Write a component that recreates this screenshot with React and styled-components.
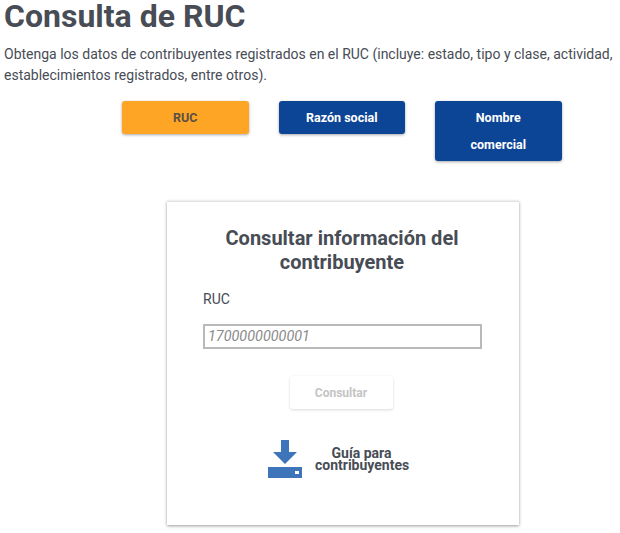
import styled, { createGlobalStyle } from "styled-components"

const GlobalStyle = createGlobalStyle`
html, body {
    margin:0;
    padding:0;
    background:#fff;
    font-family:Roboto, "Liberation Sans", sans-serif;
    overflow:hidden;
}
`

function DownloadIcon(){
    return (
        <svg width="34" height="38" viewBox="0 0 34 38">
            <path d="M13 0H21V12H29L17 24L5 12H13Z" fill="#3e74b9"/>
            <path d="M0 27H34V38H0Z" fill="#3e74b9"/>
            <rect x="27" y="31" width="4" height="3" fill="#fff"/>
        </svg>
    )
}

export default function App(){
    return(<>
    <GlobalStyle/>
    <Page>
        <Title>Consulta de RUC</Title>
        <Intro>Obtenga los datos de contribuyentes registrados en el RUC (incluye: estado, tipo y clase, actividad, establecimientos registrados, entre otros).</Intro>
        <Tabs>
            <TabButton $active>RUC</TabButton>
            <TabButton>Razón social</TabButton>
            <TabButton>Nombre comercial</TabButton>
        </Tabs>
        <Card>
            <CardTitle>Consultar información del contribuyente</CardTitle>
            <FieldLabel>RUC</FieldLabel>
            <FieldInput placeholder="1700000000001"/>
            <SubmitButton disabled>Consultar</SubmitButton>
            <GuideLink>
                <DownloadIcon/>
                <GuideText>Guía para contribuyentes</GuideText>
            </GuideLink>
        </Card>
    </Page></>
    )
}

const Page = styled.div`
display:flex;
flex-direction:column;
width:620px;
height:533px;
overflow:hidden;
color:#474c55;
`
const Title = styled.h1`
margin:0 0 0 4px;
font-size:32px;
line-height:32px;
font-weight:700;
color:#474c55;
`
const Intro = styled.p`
margin:12px 0 0 4px;
width:612px;
font-size:14px;
line-height:21px;
color:#474c55;
`
const Tabs = styled.div`
display:flex;
align-items:flex-start;
gap:30px;
margin-top:15px;
padding-left:122px;
`
const TabButton = styled.button`
width:126.500px;
padding:3px 24px;
border:none;
border-radius:3px;
background:${props => props.$active ? "#ffa526" : "#0d4596"};
color:${props => props.$active ? "#5a5045" : "#fff"};
font-family:inherit;
font-size:12.500px;
font-weight:700;
line-height:27px;
box-shadow:0 1px 3px rgba(0,0,0,0.35);
`
const Card = styled.div`
display:flex;
flex-direction:column;
align-items:center;
box-sizing:border-box;
width:352px;
height:324px;
margin:40px 0 0 167px;
padding:24px 38px 0 36px;
border-top:1px solid #e2e2e2;
background:#fff;
box-shadow:0 1px 3px rgba(0,0,0,0.4);
`
const CardTitle = styled.h2`
margin:0;
font-size:20px;
line-height:24px;
font-weight:700;
text-align:center;
color:#474c55;
`
const FieldLabel = styled.label`
align-self:flex-start;
margin-top:16px;
font-size:14px;
line-height:18px;
color:#474c55;
`
const FieldInput = styled.input`
align-self:flex-start;
box-sizing:border-box;
width:279px;
height:25px;
margin-top:16px;
padding:0 3px;
border:2px solid #b9b9b9;
outline:none;
font-family:inherit;
font-size:14.400px;
font-style:italic;
&::placeholder{
    color:#8a8a8a;
    opacity:1;
}
`
const SubmitButton = styled.button`
width:103px;
height:33px;
margin:27px 2px 0 0;
border:none;
border-radius:3px;
background:#fff;
color:#c4c4c4;
font-family:inherit;
font-size:12px;
font-weight:700;
box-shadow:0 1px 3px rgba(0,0,0,0.15);
`
const GuideLink = styled.a`
display:flex;
align-items:center;
gap:13px;
margin-top:31px;
margin-right:8px;
`
const GuideText = styled.span`
width:93px;
font-size:14px;
line-height:12px;
font-weight:700;
text-align:center;
color:#474c55;
`
